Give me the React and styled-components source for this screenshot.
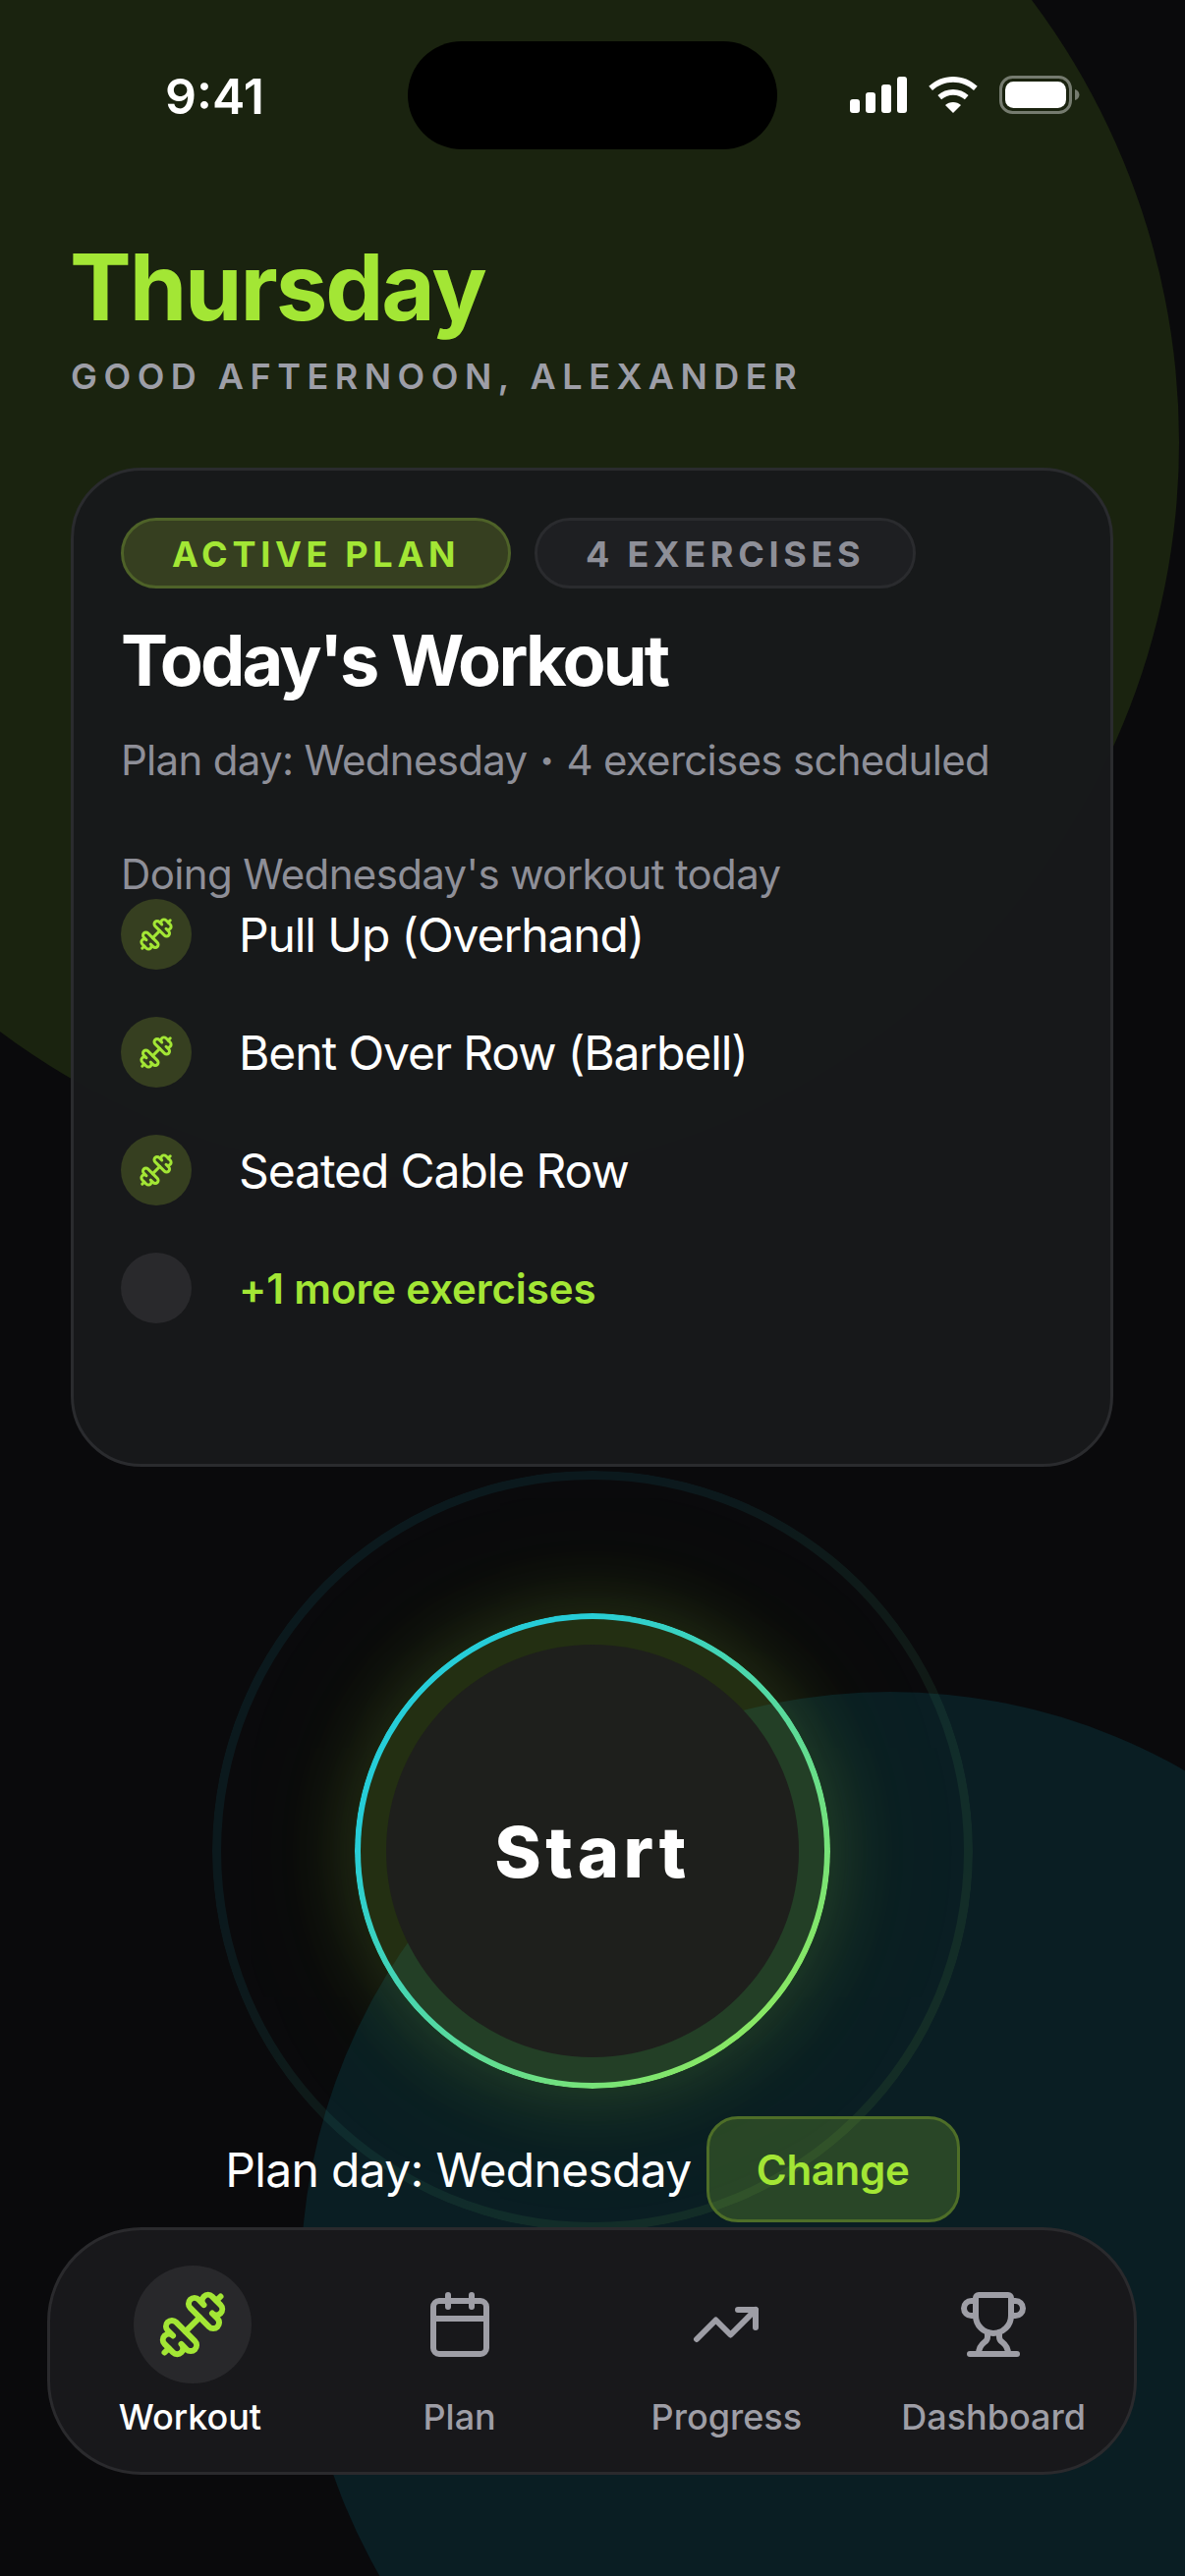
import React from "react";
import styled, { createGlobalStyle } from "styled-components";
import { Dumbbell, Calendar, TrendingUp, Trophy } from "lucide-react";

const GlobalStyle = createGlobalStyle`
  html, body {
    margin: 0;
    padding: 0;
    background: #0a0a0c;
  }
  * {
    box-sizing: border-box;
  }
`;

const exercises = ["Pull Up (Overhand)", "Bent Over Row (Barbell)", "Seated Cable Row"];

const tabs = [
  { label: "Workout", Icon: Dumbbell, active: true },
  { label: "Plan", Icon: Calendar },
  { label: "Progress", Icon: TrendingUp },
  { label: "Dashboard", Icon: Trophy },
];

export default function App() {
  return (
    <Page>
      <GlobalStyle />
      <GreenBlob />
      <TealBlob />

      <StatusBar>
        <Time>9:41</Time>
        <Island />
        <StatusIcons>
          <svg width="58" height="37" viewBox="0 0 58 37" fill="#fff">
            <rect x="0" y="23" width="10" height="14" rx="3" />
            <rect x="16" y="16" width="10" height="21" rx="3" />
            <rect x="32" y="8" width="10" height="29" rx="3" />
            <rect x="48" y="0" width="10" height="37" rx="3" />
          </svg>
          <svg width="50" height="37" viewBox="0 0 50 37" fill="#fff">
            <path d="M25 0C34.5 0 43.2 3.7 49.7 9.8L46 14C40.5 8.9 33.1 5.7 25 5.7S9.5 8.9 4 14L.3 9.8C6.8 3.7 15.5 0 25 0Z" />
            <path d="M25 13C31 13 36.4 15.3 40.6 19L36.9 23.3C33.7 20.4 29.5 18.7 25 18.7S16.3 20.4 13.1 23.3L9.4 19C13.6 15.3 19 13 25 13Z" />
            <path d="M25 26C28 26 30.8 27.1 33 28.9L25 37L17 28.9C19.2 27.1 22 26 25 26Z" />
          </svg>
          <svg width="82" height="39" viewBox="0 0 82 39" fill="none">
            <rect x="1.5" y="1.5" width="71" height="36" rx="12" stroke="#fff" strokeOpacity=".4" strokeWidth="3" />
            <rect x="6" y="6" width="62" height="27" rx="8.5" fill="#fff" />
            <path d="M77 14c2.6.6 4.5 3 4.5 5.500s-1.900 4.900-4.500 5.500z" fill="#fff" fillOpacity=".4" />
          </svg>
        </StatusIcons>
      </StatusBar>

      <Header>
        <Day>Thursday</Day>
        <Greeting>GOOD AFTERNOON, ALEXANDER</Greeting>
      </Header>

      <Card>
        <Pills>
          <Pill $active>ACTIVE PLAN</Pill>
          <Pill>4 EXERCISES</Pill>
        </Pills>
        <CardTitle>Today's Workout</CardTitle>
        <CardMeta>
          Plan day: Wednesday<MetaDot>·</MetaDot>4 exercises scheduled
        </CardMeta>
        <CardNote>Doing Wednesday's workout today</CardNote>
        <ExerciseList>
          {exercises.map((name) => (
            <ExerciseRow key={name}>
              <ExerciseBadge>
                <Dumbbell size={36} strokeWidth={2} />
              </ExerciseBadge>
              <ExerciseName>{name}</ExerciseName>
            </ExerciseRow>
          ))}
          <ExerciseRow>
            <ExerciseBadge $empty />
            <MoreLabel>+1 more exercises</MoreLabel>
          </ExerciseRow>
        </ExerciseList>
      </Card>

      <StartArea>
        <OuterRing />
        <StartRing>
          <StartButton>Start</StartButton>
        </StartRing>
      </StartArea>

      <PlanRow>
        <PlanLabel>Plan day: Wednesday</PlanLabel>
        <ChangeButton>Change</ChangeButton>
      </PlanRow>

      <TabBar>
        {tabs.map(({ label, Icon, active }) => (
          <Tab key={label}>
            <TabIcon $active={active}>
              <Icon size={72} strokeWidth={2} />
            </TabIcon>
            <TabLabel $active={active}>{label}</TabLabel>
          </Tab>
        ))}
      </TabBar>
    </Page>
  );
}

const Page = styled.div`
  position: relative;
  width: 1206px;
  height: 2622px;
  overflow: hidden;
  background: #0a0a0c;
  font-family: Inter, "Liberation Sans", sans-serif;
  color: #fff;
`;

const GreenBlob = styled.div`
  position: absolute;
  top: -300px;
  left: -300px;
  width: 1500px;
  height: 1500px;
  border-radius: 50%;
  background: #1a230f;
`;

const TealBlob = styled.div`
  position: absolute;
  right: -300px;
  bottom: -300px;
  width: 1200px;
  height: 1200px;
  border-radius: 50%;
  background: #0a1e23;
`;

const StatusBar = styled.div`
  position: relative;
  display: flex;
  align-items: center;
  height: 110px;
  padding-left: 168px;
  top: 42px;
`;

const Time = styled.div`
  width: 101px;
  font-size: 50px;
  font-weight: 600;
  line-height: 60px;
  position: relative;
  top: 1px;
`;

const Island = styled.div`
  width: 376px;
  height: 110px;
  margin-left: 146px;
  border-radius: 55px;
  background: #000;
`;

const StatusIcons = styled.div`
  display: flex;
  align-items: center;
  gap: 22px;
  margin-left: 74px;
  position: relative;
  top: -1px;
`;

const Header = styled.header`
  position: relative;
  padding: 132px 72px 0;
`;

const Day = styled.h1`
  margin: 0 0 0 -1px;
  font-size: 94px;
  font-weight: 700;
  line-height: 100px;
  letter-spacing: -2.100px;
  color: #a3e635;
`;

const Greeting = styled.div`
  margin-top: 19px;
  font-size: 36px;
  font-weight: 600;
  line-height: 44px;
  letter-spacing: 6.500px;
  color: #9d9ea7;
`;

const Card = styled.section`
  position: relative;
  height: 1017px;
  margin: 71px 73px 0 72px;
  padding: 48px;
  border: 3px solid #2a2b2e;
  border-radius: 72px;
  background: rgba(24, 25, 27, 0.97);
`;

const Pills = styled.div`
  display: flex;
  gap: 24px;
`;

const Pill = styled.div`
  display: flex;
  align-items: center;
  height: 72px;
  padding: 2px 49px 0;
  border: 3px solid ${(p) => (p.$active ? "#4e6228" : "#2a2b2e")};
  border-radius: 36px;
  background: ${(p) => (p.$active ? "#363f20" : "#1e1f22")};
  color: ${(p) => (p.$active ? "#a3e635" : "#8e8f98")};
  font-size: 36px;
  font-weight: 700;
  letter-spacing: 4.700px;
`;

const CardTitle = styled.h2`
  margin: 31px 0 0;
  font-size: 72px;
  font-weight: 700;
  line-height: 84px;
  letter-spacing: -2.800px;
`;

const CardMeta = styled.div`
  margin-top: 34px;
  font-size: 42px;
  line-height: 52px;
  letter-spacing: -0.700px;
  color: #8e8f98;
`;

const MetaDot = styled.span`
  margin: 0 13px;
  font-weight: 800;
`;

const CardNote = styled.div`
  margin-top: 65px;
  font-size: 42px;
  line-height: 50px;
  letter-spacing: -0.650px;
  color: #8e8f98;
`;

const ExerciseList = styled.div`
  display: flex;
  flex-direction: column;
  gap: 48px;
`;

const ExerciseRow = styled.div`
  display: flex;
  align-items: center;
  gap: 48px;
  height: 72px;
`;

const ExerciseBadge = styled.div`
  display: flex;
  align-items: center;
  justify-content: center;
  width: 72px;
  height: 72px;
  border-radius: 50%;
  background: ${(p) => (p.$empty ? "#29292c" : "#363f20")};
  color: #a3e635;
`;

const ExerciseName = styled.div`
  font-size: 48px;
  letter-spacing: -1.100px;
  color: #fff;
`;

const MoreLabel = styled.div`
  font-size: 42px;
  font-weight: 600;
  letter-spacing: -0.100px;
  color: #a3e635;
`;

const StartArea = styled.div`
  position: relative;
  display: flex;
  justify-content: center;
  margin-top: 149px;
`;

const ringMask = `
  -webkit-mask: linear-gradient(#000 0 0) content-box, linear-gradient(#000 0 0);
  -webkit-mask-composite: xor;
  mask: linear-gradient(#000 0 0) content-box exclude, linear-gradient(#000 0 0);
`;

const OuterRing = styled.div`
  position: absolute;
  top: -145px;
  left: 216px;
  width: 774px;
  height: 774px;
  border-radius: 50%;

  &::before {
    content: "";
    position: absolute;
    inset: 0;
    padding: 9px;
    border-radius: 50%;
    background: linear-gradient(135deg, #22d3ee 30%, #a3e635 95%);
    opacity: 0.075;
    ${ringMask}
  }
`;

const StartRing = styled.div`
  position: relative;
  display: flex;
  align-items: center;
  justify-content: center;
  width: 484px;
  height: 484px;
  border-radius: 50%;
  background: rgba(163, 230, 53, 0.17);
  box-shadow: 0 0 80px rgba(163, 230, 53, 0.2), 0 0 190px rgba(163, 230, 53, 0.06);

  &::before {
    content: "";
    position: absolute;
    inset: 0;
    padding: 6px;
    border-radius: 50%;
    background: linear-gradient(135deg, #26cdd8 24%, #8ce85f 88%);
    ${ringMask}
  }
`;

const StartButton = styled.button`
  width: 420px;
  height: 420px;
  padding: 0;
  border: 0;
  border-radius: 50%;
  background: #1e1f1c;
  color: #fff;
  font-family: inherit;
  font-size: 72px;
  font-weight: 800;
  letter-spacing: 4.500px;
`;

const PlanRow = styled.div`
  position: relative;
  display: flex;
  align-items: center;
  justify-content: center;
  gap: 15px;
  margin-top: 28px;
`;

const PlanLabel = styled.div`
  font-size: 48px;
  letter-spacing: -0.700px;
  color: #fff;
`;

const ChangeButton = styled.button`
  width: 258px;
  height: 108px;
  padding: 0;
  border: 3px solid #4e6e28;
  border-radius: 32px;
  background: rgba(163, 230, 53, 0.2);
  color: #a3e635;
  font-family: inherit;
  font-size: 42px;
  font-weight: 600;
  letter-spacing: -0.300px;
`;

const TabBar = styled.nav`
  position: relative;
  display: grid;
  grid-template-columns: repeat(4, 1fr);
  height: 252px;
  margin: 5px 49px 0 48px;
  padding: 36px 7px 0 9px;
  border: 3px solid #2a2a2d;
  border-radius: 96px;
  background: #18181b;
`;

const Tab = styled.div`
  display: flex;
  flex-direction: column;
  align-items: center;
`;

const TabIcon = styled.div`
  display: flex;
  align-items: center;
  justify-content: center;
  width: 120px;
  height: 120px;
  border-radius: 50%;
  background: ${(p) => (p.$active ? "#28282b" : "transparent")};
  color: ${(p) => (p.$active ? "#a3e635" : "#9e9ea6")};
`;

const TabLabel = styled.div`
  margin-top: 12px;
  margin-right: ${(p) => (p.$active ? "5px" : "0")};
  font-size: 36px;
  font-weight: 500;
  line-height: 44px;
  color: ${(p) => (p.$active ? "#fff" : "#9e9ea6")};
`;
